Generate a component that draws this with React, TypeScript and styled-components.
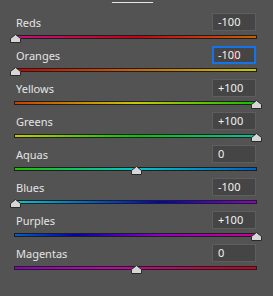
import React from "react";
import styled, { createGlobalStyle } from "styled-components";

const Global = createGlobalStyle`
  html, body { margin: 0; padding: 0; background: #535353; }
  body { width: 273px; height: 296px; overflow: hidden; font-family: "Noto Sans", "Open Sans", sans-serif; }
`;

const Panel = styled.div`
  width: 273px;
  height: 296px;
  background: #535353;
  padding: 0 16px 0 14px;
  box-sizing: border-box;
  display: flex;
  flex-direction: column;
  overflow: hidden;
`;

const Title = styled.div`
  margin-top: -10px;
  height: 13px;
  line-height: 12px;
  font-size: 12px;
  color: #e6e6e6;
  text-align: center;
  text-decoration: underline;
  text-underline-offset: 2px;
  padding-right: 6px;
  margin-bottom: 10px;
`;

const Row = styled.div`
  display: flex;
  flex-direction: column;
  height: 33px;
`;

const Header = styled.div`
  display: flex;
  align-items: center;
  justify-content: space-between;
  height: 18px;
  padding-left: 2px;
  margin-right: 1px;
`;

const Label = styled.span`
  font-size: 11px;
  color: #e4e4e4;
  line-height: 18px;
  padding-top: 2px;
`;

const Input = styled.div<{ $focused?: boolean }>`
  position: relative;
  width: 44px;
  height: 18px;
  box-sizing: border-box;
  background: #454545;
  border: 1px solid ${(p) => (p.$focused ? "#1473e6" : "#5e5e5e")};
  box-shadow: ${(p) => (p.$focused ? "inset 0 0 0 1px #1473e6" : "none")};
  color: #f2f2f2;
  font-size: 11px;
  line-height: 16px;
  padding-left: 5px;
`;

const Caret = styled.span`
  position: absolute;
  top: 3px;
  left: 21px;
  width: 1px;
  height: 11px;
  background: #c03050;
`;

const TrackWrap = styled.div`
  position: relative;
  margin-top: 4px;
  height: 4px;
`;

const Track = styled.div<{ $g: string }>`
  height: 4px;
  box-sizing: border-box;
  border: 1px solid #1e1e1e;
  background: ${(p) => p.$g};
`;

const Thumb = styled.svg`
  position: absolute;
  top: -1px;
  width: 11px;
  height: 9px;
  margin-left: -5.5px;
`;

type Item = { name: string; value: number; g: string; focused?: boolean };

const items: Item[] = [
  { name: "Reds", value: -100, g: "linear-gradient(to right, #c2107e, #c80018 50%, #c86000)" },
  { name: "Oranges", value: -100, g: "linear-gradient(to right, #c80000, #c86400 50%, #c8c800)", focused: true },
  { name: "Yellows", value: 100, g: "linear-gradient(to right, #c84000, #c8c800 50%, #10c000)" },
  { name: "Greens", value: 100, g: "linear-gradient(to right, #c8c800, #00c800 50%, #00c0a0)" },
  { name: "Aquas", value: 0, g: "linear-gradient(to right, #20c000, #00c8c8 50%, #0060c8)" },
  { name: "Blues", value: -100, g: "linear-gradient(to right, #00c8c8, #0000c8 60%, #9000c8)" },
  { name: "Purples", value: 100, g: "linear-gradient(to right, #0060c8, #0000c0 25%, #9000c8 60%, #c80090)" },
  { name: "Magentas", value: 0, g: "linear-gradient(to right, #8c00c8, #c800b0 40%, #c80040 80%, #c80020)" },
];

const fmt = (v: number) => (v > 0 ? `+${v}` : `${v}`);

export default function App() {
  return (
    <>
      <Global />
      <Panel>
        <Title>Default</Title>
        {items.map((it) => {
          const pct = (it.value + 100) / 200;
          return (
            <Row key={it.name}>
              <Header>
                <Label>{it.name}</Label>
                <Input $focused={it.focused}>
                  {fmt(it.value)}
                  {it.focused && <Caret />}
                </Input>
              </Header>
              <TrackWrap>
                <Track $g={it.g} />
                <Thumb
                  viewBox="0 0 11 9"
                  style={{ left: `calc(1.5px + ${pct} * (100% - 2px))` }}
                >
                  <polygon points="5.5,0.5 10.5,4.5 10.5,8.5 0.5,8.5 0.5,4.5" fill="#d6d6d6" stroke="#2a2a2a" strokeWidth="1" />
                </Thumb>
              </TrackWrap>
            </Row>
          );
        })}
      </Panel>
    </>
  );
}
